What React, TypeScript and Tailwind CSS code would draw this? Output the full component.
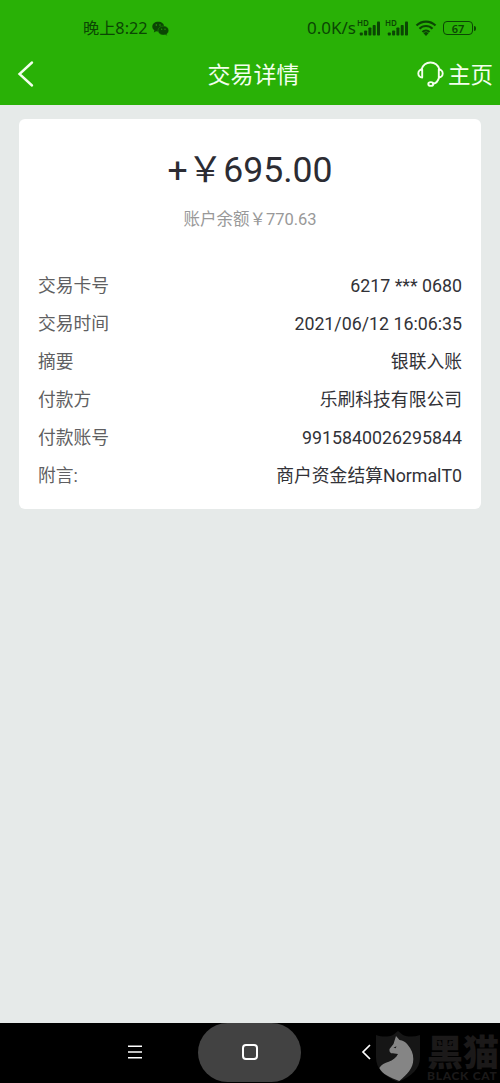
import { clsx } from 'clsx';

const details = [
  { label: '交易卡号', value: '6217 *** 0680' },
  { label: '交易时间', value: '2021/06/12 16:06:35' },
  { label: '摘要', value: '银联入账' },
  { label: '付款方', value: '乐刷科技有限公司' },
  { label: '付款账号', value: '9915840026295844' },
  { label: '附言:', value: '商户资金结算NormalT0' },
];

export default function App() {
  return (
    <div className="flex h-[1083px] w-[500px] flex-col overflow-hidden whitespace-nowrap bg-[#e6eae9] font-['Roboto','Noto_Sans_CJK_SC',sans-serif]">
      <header className="h-[105px] shrink-0 bg-[#29b106]">
        <StatusBar />
        <TitleBar />
      </header>

      <main className="flex-1 px-[19px] pt-[14px]">
        <section className="h-[390px] rounded-md bg-white px-[19px] pt-[28px]">
          <div className="text-center text-[35.6px] leading-[46px] text-[#2c2c33]">+￥695.00</div>
          <div className="mt-[15px] text-center text-[16.5px] leading-6 text-[#999]">账户余额￥770.63</div>
          <dl className="mt-[35px]">
            {details.map(item => (
              <div key={item.label} className="flex h-[38px] items-center justify-between text-[17.8px]">
                <dt className="text-[#5f5f62]">{item.label}</dt>
                <dd className="text-[#323237]">{item.value}</dd>
              </div>
            ))}
          </dl>
        </section>
      </main>

      <NavBar />
    </div>
  );
}

function StatusBar() {
  return (
    <div className="flex h-[45px] items-center pt-[11px] pl-[83px] font-['Noto_Sans','Noto_Sans_CJK_SC',sans-serif] text-[#0b4604]">
      <span className="w-[65px] text-[16.2px] leading-5">晚上8:22</span>
      <WechatIcon />
      <span className="ml-[138px] w-[51px] text-[17px] leading-5">0.0K/s</span>
      <Signal />
      <Signal className="ml-[5px]" />
      <svg className="ml-[6px]" width="22" height="18" viewBox="0 0 22 18" fill="none" stroke="currentColor" strokeWidth="2.2">
        <path d="M1.5 6.5a13.5 13.5 0 0 1 19 0M4.5 9.8a9 9 0 0 1 13 0M7.5 13a5 5 0 0 1 7 0" />
        <path d="M8.5 14.2L11 17l2.5-2.8a3.5 3.5 0 0 0-5 0z" fill="currentColor" stroke="none" />
      </svg>
      <div className="ml-[6px] flex h-[14px] w-[30px] items-center justify-center rounded-[4px] border-[1.5px] border-current text-[11px] font-semibold leading-none">
        67
      </div>
      <div className="ml-px h-[5px] w-[2px] rounded-r-full bg-current" />
    </div>
  );
}

function WechatIcon() {
  return (
    <svg className="ml-[4px]" width="17" height="15" viewBox="0 0 17 15">
      <path d="M6.2.7C2.8.7.3 2.8.3 5.6c0 1.6.8 2.9 2.1 3.8l-.6 2 2.3-1.2c.7.2 1.4.3 2.1.3 3.4 0 6-2.1 6-4.9S9.6.7 6.2.7z" fill="currentColor" />
      <path d="M11.4 5C8.3 5 6 7 6 9.5S8.3 14 11.4 14c.6 0 1.2-.1 1.8-.3l2 1-.5-1.7c1.2-.8 2-2.1 2-3.5C16.7 7 14.4 5 11.4 5z" fill="currentColor" stroke="#29b106" strokeWidth=".4" />
      <g fill="#29b106">
        <circle cx="4.3" cy="4" r=".7" />
        <circle cx="8" cy="4" r=".7" />
        <circle cx="9.7" cy="8.2" r=".6" />
        <circle cx="13" cy="8.2" r=".6" />
      </g>
    </svg>
  );
}

function Signal({ className }: { className?: string }) {
  return (
    <div className={clsx('relative h-[18px] w-[23px]', className)}>
      <span className="absolute top-0 -left-px text-[8px] font-semibold leading-none">HD</span>
      <svg className="absolute inset-0" width="23" height="18" viewBox="0 0 23 18" fill="currentColor">
        <rect x="1.8" y="13.5" width="3" height="3" rx=".8" />
        <rect x="6.1" y="11.5" width="3" height="5" rx=".8" />
        <rect x="10.4" y="8.5" width="3" height="8" rx=".8" />
        <rect x="14.7" y="6" width="3" height="10.5" rx=".8" />
        <rect x="19" y="2.5" width="3" height="14" rx=".8" />
      </svg>
    </div>
  );
}

function TitleBar() {
  return (
    <div className="grid h-[60px] grid-cols-[1fr_auto_1fr] items-center pr-[7px] pl-[17px] text-[#f3ffed]">
      <svg className="mb-[2px]" width="18" height="28" viewBox="0 0 18 28" fill="none" stroke="currentColor" strokeWidth="2.4" strokeLinecap="round">
        <path d="M15 2.5L2.5 14 15 25.5" />
      </svg>
      <h1 className="mr-[3px] pt-[2px] text-[23px] leading-8">交易详情</h1>
      <div className="flex items-center justify-end gap-[4px]">
        <svg className="mb-[3px]" width="27" height="26" viewBox="0 0 27 26" fill="none" stroke="currentColor" strokeWidth="1.9" strokeLinecap="round">
          <path d="M4.5 8.5C6 4 9.5 1.5 13.5 1.5S21 4 22.5 8.5" />
          <path d="M5.2 8.5v8C3 16.5 1.3 14.7 1.3 12.5s1.7-4 3.9-4zM21.8 8.5v8c2.2 0 3.9-1.8 3.9-4s-1.7-4-3.9-4z" strokeLinejoin="round" />
          <path d="M22 16.5c-.8 3.5-3 5.8-6 6.3" />
          <ellipse cx="13.8" cy="23" rx="2.5" ry="1.9" />
        </svg>
        <span className="text-[22.5px] leading-8">主页</span>
      </div>
    </div>
  );
}

function NavBar() {
  return (
    <nav className="relative flex h-[60px] shrink-0 items-center bg-black pb-[2px] text-white">
      <svg className="ml-[128px]" width="14" height="14" viewBox="0 0 14 14" stroke="currentColor" strokeWidth="1.5">
        <path d="M0 1.2h14M0 7h14M0 12.8h14" />
      </svg>
      <div className="ml-[56px] flex h-[59px] w-[103px] items-center justify-center rounded-full bg-[#424242]">
        <div className="h-[16px] w-[16px] rounded-[4px] border-2 border-white" />
      </div>
      <svg className="ml-[60px]" width="10" height="16" viewBox="0 0 10 16" fill="none" stroke="currentColor" strokeWidth="1.7">
        <path d="M9 1L2 8l7 7" />
      </svg>
      <Watermark />
    </nav>
  );
}

function Watermark() {
  return (
    <div className="absolute top-[8px] left-[375px] flex w-[125px] gap-[6px]">
      <svg className="shrink-0" width="46" height="51" viewBox="0 0 46 51">
        <path d="M1 4c6 2 12 2 17 0l5-4 5 4c5 2 11 2 17 0v22c0 12-8 19-22 25C9 45 1 38 1 26z" fill="#161616" />
        <path d="M21 5l3.500 4c3.500.5 6 2 8 4.500 4 4.500 5.800 9 5.800 14.500 0 9.500-6 15-14 22-4-1.500-9-3.500-12.300-5.500-3.500-2-6-4.500-7.700-7.500 2-3.500 5.500-5 9.400-6.300 4-1.500 7.300-3.700 9.300-7.700-2.500-.8-4.700-.3-6.700-.8-1.600-.5-2-2.200-1.800-4.200l4-5z" fill="#858585" />
        <path d="M18.500 16.800l3-1.600-.8 2z" fill="#161616" />
      </svg>
      <div className="flex flex-col font-['Noto_Sans_CJK_SC',sans-serif] font-black text-[#1b1919]">
        <span className="text-[36px] leading-[38px]">黑猫</span>
        <span className="font-['Lato',sans-serif] text-[12px] leading-[14px] tracking-[0.7px]">BLACK CAT</span>
      </div>
    </div>
  );
}
